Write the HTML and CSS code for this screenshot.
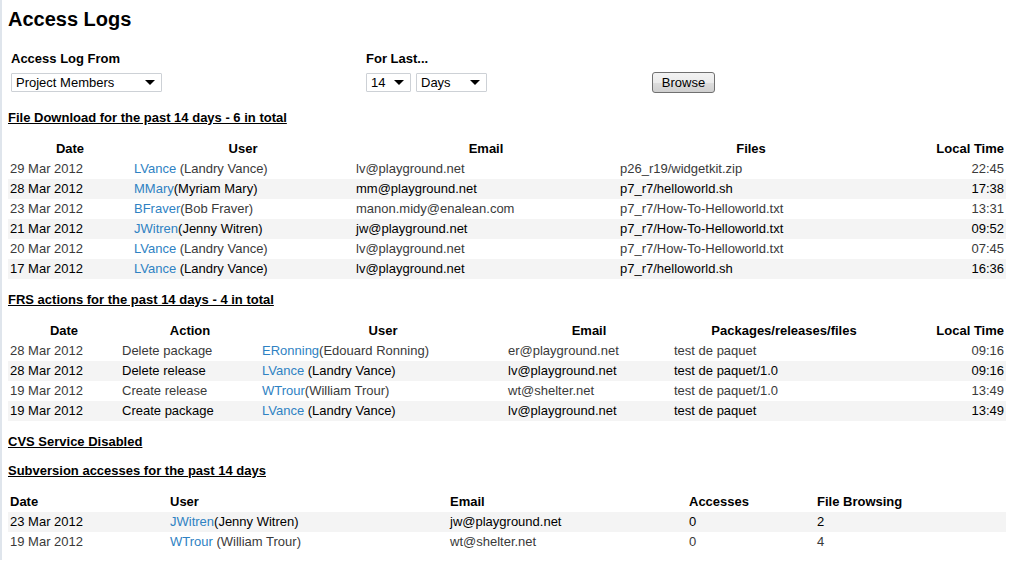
FILE: index.html
```html
<!DOCTYPE html>
<html>
<head>
<meta charset="utf-8">
<title>Access Logs</title>
<link rel="stylesheet" href="styles.css">
</head>
<body>
<h1 class="title">Access Logs</h1>

<form class="filter">
  <div class="label">Access Log From</div>
  <div class="label">For Last...</div>
  <div></div>
  <div class="ctrl">
    <span class="sel sel-from"><select><option>Project Members</option></select></span>
  </div>
  <div class="ctrl">
    <span class="sel sel-num"><select><option>14</option></select></span>
    <span class="sel sel-unit"><select><option>Days</option></select></span>
  </div>
  <div class="ctrl">
    <button type="button" class="btn">Browse</button>
  </div>
</form>

<h3 class="section">File Download for the past 14 days - 6 in total</h3>
<table class="log">
  <colgroup><col style="width:124px"><col style="width:222px"><col style="width:264px"><col style="width:266px"><col style="width:122px"></colgroup>
  <thead>
    <tr><th>Date</th><th>User</th><th>Email</th><th>Files</th><th class="r">Local Time</th></tr>
  </thead>
  <tbody>
    <tr class="odd"><td>29 Mar 2012</td><td><a href="#">LVance</a> (Landry Vance)</td><td>lv@playground.net</td><td>p26_r19/widgetkit.zip</td><td class="r">22:45</td></tr>
    <tr class="even"><td>28 Mar 2012</td><td><a href="#">MMary</a>(Myriam Mary)</td><td>mm@playground.net</td><td>p7_r7/helloworld.sh</td><td class="r">17:38</td></tr>
    <tr class="odd"><td>23 Mar 2012</td><td><a href="#">BFraver</a>(Bob Fraver)</td><td>manon.midy@enalean.com</td><td>p7_r7/How-To-Helloworld.txt</td><td class="r">13:31</td></tr>
    <tr class="even"><td>21 Mar 2012</td><td><a href="#">JWitren</a>(Jenny Witren)</td><td>jw@playground.net</td><td>p7_r7/How-To-Helloworld.txt</td><td class="r">09:52</td></tr>
    <tr class="odd"><td>20 Mar 2012</td><td><a href="#">LVance</a> (Landry Vance)</td><td>lv@playground.net</td><td>p7_r7/How-To-Helloworld.txt</td><td class="r">07:45</td></tr>
    <tr class="even"><td>17 Mar 2012</td><td><a href="#">LVance</a> (Landry Vance)</td><td>lv@playground.net</td><td>p7_r7/helloworld.sh</td><td class="r">16:36</td></tr>
  </tbody>
</table>

<h3 class="section">FRS actions for the past 14 days - 4 in total</h3>
<table class="log">
  <colgroup><col style="width:112px"><col style="width:140px"><col style="width:246px"><col style="width:166px"><col style="width:224px"><col style="width:110px"></colgroup>
  <thead>
    <tr><th>Date</th><th>Action</th><th>User</th><th>Email</th><th>Packages/releases/files</th><th class="r">Local Time</th></tr>
  </thead>
  <tbody>
    <tr class="odd"><td>28 Mar 2012</td><td>Delete package</td><td><a href="#">ERonning</a>(Edouard Ronning)</td><td>er@playground.net</td><td>test de paquet</td><td class="r">09:16</td></tr>
    <tr class="even"><td>28 Mar 2012</td><td>Delete release</td><td><a href="#">LVance</a> (Landry Vance)</td><td>lv@playground.net</td><td>test de paquet/1.0</td><td class="r">09:16</td></tr>
    <tr class="odd"><td>19 Mar 2012</td><td>Create release</td><td><a href="#">WTrour</a>(William Trour)</td><td>wt@shelter.net</td><td>test de paquet/1.0</td><td class="r">13:49</td></tr>
    <tr class="even"><td>19 Mar 2012</td><td>Create package</td><td><a href="#">LVance</a> (Landry Vance)</td><td>lv@playground.net</td><td>test de paquet</td><td class="r">13:49</td></tr>
  </tbody>
</table>

<h3 class="section">CVS Service Disabled</h3>

<h3 class="section">Subversion accesses for the past 14 days</h3>
<table class="log left">
  <colgroup><col style="width:160px"><col style="width:280px"><col style="width:239px"><col style="width:128px"><col style="width:191px"></colgroup>
  <thead>
    <tr><th>Date</th><th>User</th><th>Email</th><th>Accesses</th><th>File Browsing</th></tr>
  </thead>
  <tbody>
    <tr class="even"><td>23 Mar 2012</td><td><a href="#">JWitren</a>(Jenny Witren)</td><td>jw@playground.net</td><td>0</td><td>2</td></tr>
    <tr class="odd"><td>19 Mar 2012</td><td><a href="#">WTrour</a> (William Trour)</td><td>wt@shelter.net</td><td>0</td><td>4</td></tr>
  </tbody>
</table>
</body>
</html>
```

FILE: styles.css
```css
html {
  border-left: 2px solid #dfe5ec;
  background: #fff;
}
body {
  margin: 8px 4px 8px 6px;
  font-family: "Liberation Sans", Arial, sans-serif;
  font-size: 13px;
  line-height: 16px;
  color: #000;
}
.title {
  margin: 0;
  font-size: 20px;
  line-height: 23px;
  font-weight: bold;
}
.filter {
  display: grid;
  grid-template-columns: 355px 286px auto;
  grid-template-rows: 16px 21px;
  row-gap: 5px;
  margin: 20px 0 17px 3px;
}
.label {
  font-weight: bold;
}
.ctrl {
  display: flex;
  align-items: center;
  gap: 5px;
}
.sel {
  position: relative;
  display: inline-block;
  height: 19px;
}
.sel select {
  -webkit-appearance: none;
  appearance: none;
  box-sizing: border-box;
  height: 19px;
  border: 1px solid #cdd1d6;
  border-radius: 1px;
  background: #fff;
  font-family: "Liberation Sans", Arial, sans-serif;
  font-size: 13px;
  color: #000;
  padding: 0 0 0 4px;
  margin: 0;
  outline: none;
}
.sel::after {
  content: "";
  position: absolute;
  right: 7px;
  top: 7px;
  border-left: 5px solid transparent;
  border-right: 5px solid transparent;
  border-top: 5px solid #000;
  pointer-events: none;
}
.sel-from select { width: 151px; }
.sel-num select { width: 45px; }
.sel-unit select { width: 71px; }
.btn {
  box-sizing: border-box;
  width: 63px;
  height: 21px;
  margin: 0;
  padding: 0;
  border: 1px solid #707070;
  border-radius: 3px;
  background: linear-gradient(#f3f3f3, #ebebeb 50%, #dddddd 51%, #cfcfcf);
  font-family: "Liberation Sans", Arial, sans-serif;
  font-size: 13px;
  color: #000;
}
.section {
  margin: 13px 0;
  font-size: 13px;
  line-height: 16px;
  font-weight: bold;
  text-decoration: underline;
}
.log {
  width: 998px;
  table-layout: fixed;
  border-collapse: collapse;
  border-spacing: 0;
}
.log th,
.log td {
  padding: 2px 2px;
  white-space: nowrap;
  overflow: hidden;
}
.log th {
  font-weight: bold;
  text-align: center;
  color: #000;
}
.log td {
  text-align: left;
}
.log.left th {
  text-align: left;
}
.log .r,
.log th.r {
  text-align: right;
}
.odd {
  color: #3a3a3a;
  background: #fff;
}
.even {
  color: #000;
  background: #f4f4f4;
}
a {
  color: #2f82c3;
  text-decoration: none;
}
```
